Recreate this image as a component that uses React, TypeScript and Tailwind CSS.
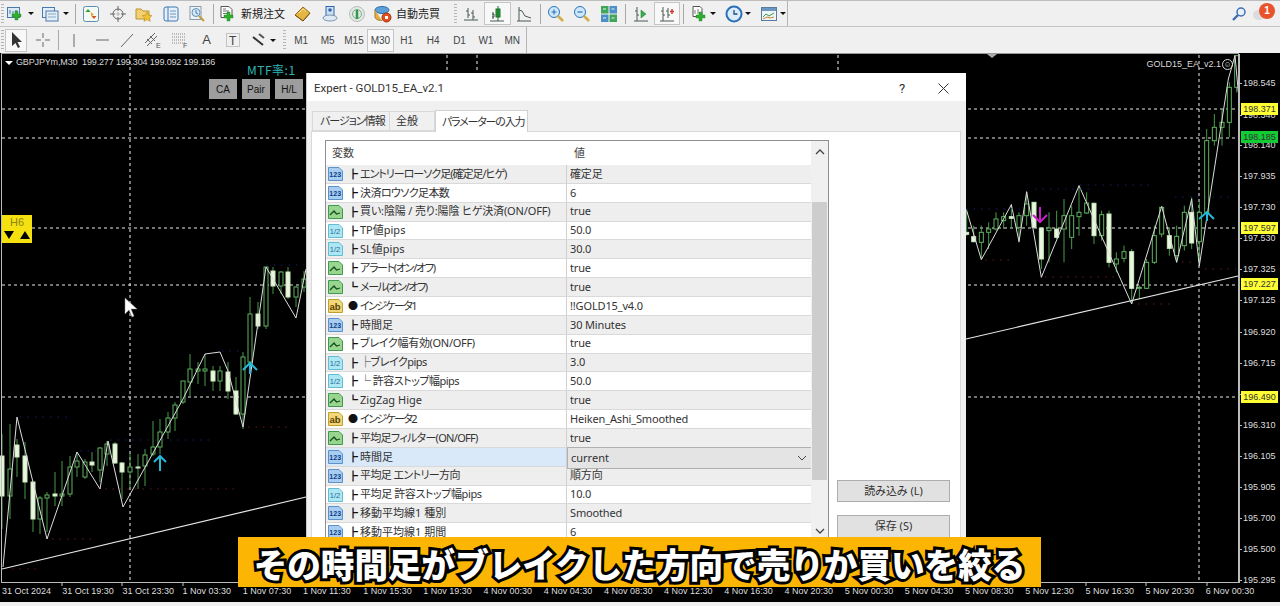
import { ReactNode } from "react";

const UI = "font-['Liberation_Sans','Noto_Sans_CJK_JP',sans-serif]";
const JP = "font-['Noto_Sans','Noto_Sans_CJK_JP',sans-serif] [font-feature-settings:'palt']";

// [x, wickTop, wickBottom, bodyTop, bodyBottom, light]
type Candle = [number, number, number, number, number, number];

const leftCandles: Candle[] = [
  [2, 435, 530, 457, 497, 1], [10, 425, 520, 470, 497, 0], [17, 440, 478, 446, 458, 1], [25, 443, 500, 457, 483, 1],
  [33, 483, 533, 483, 520, 1], [40, 497, 535, 499, 520, 0], [47, 493, 533, 496, 499, 0], [55, 473, 507, 495, 497, 1],
  [62, 462, 507, 495, 497, 0], [70, 457, 498, 468, 495, 0], [77, 453, 478, 462, 468, 0], [85, 460, 480, 463, 478, 0],
  [92, 453, 473, 463, 466, 1], [100, 448, 483, 449, 471, 0], [107, 442, 467, 445, 455, 0], [115, 443, 465, 445, 464, 1],
  [122, 463, 500, 464, 473, 1], [130, 455, 490, 468, 473, 0], [138, 455, 490, 468, 469, 1], [145, 450, 487, 456, 467, 0],
  [153, 422, 457, 448, 455, 0], [160, 420, 455, 433, 448, 0], [168, 413, 440, 419, 433, 0], [175, 403, 432, 406, 419, 0],
  [183, 382, 405, 382, 403, 0], [190, 355, 397, 370, 383, 0], [198, 363, 385, 370, 372, 0], [205, 355, 387, 370, 372, 0],
  [213, 367, 392, 372, 382, 1], [220, 367, 392, 372, 382, 0], [228, 363, 400, 373, 392, 1], [236, 378, 416, 392, 415, 1],
  [243, 353, 430, 358, 415, 0], [250, 298, 370, 315, 363, 0], [258, 303, 330, 315, 327, 1], [266, 268, 330, 268, 327, 0],
  [273, 268, 295, 272, 287, 1], [281, 272, 295, 273, 287, 0], [288, 268, 300, 273, 298, 1], [296, 287, 308, 288, 298, 0],
  [304, 272, 293, 280, 288, 0],
];

const rightCandles: Candle[] = [
  [20, 480, 560, 550, 556, 1], [41, 530, 580, 563, 578, 1], [64, 530, 630, 550, 580, 0], [86, 520, 600, 540, 550, 0],
  [108, 490, 545, 510, 540, 0], [131, 490, 540, 503, 515, 0], [154, 465, 540, 503, 508, 1], [177, 490, 580, 500, 535, 0],
  [200, 430, 530, 465, 500, 0], [222, 460, 535, 460, 535, 1], [244, 535, 660, 537, 630, 1], [267, 490, 640, 537, 545, 0],
  [290, 485, 570, 540, 565, 1], [312, 450, 640, 500, 540, 0], [335, 470, 600, 500, 565, 0], [357, 410, 560, 490, 503, 0],
  [380, 430, 495, 462, 492, 0], [402, 460, 585, 463, 560, 1], [425, 485, 575, 497, 560, 0], [447, 485, 655, 495, 640, 1],
  [469, 610, 670, 630, 645, 0], [492, 590, 640, 608, 628, 0], [515, 600, 765, 608, 718, 1], [538, 710, 750, 715, 718, 0],
  [560, 630, 720, 640, 718, 0], [583, 530, 645, 560, 640, 0], [605, 475, 565, 475, 555, 0], [628, 535, 620, 560, 598, 1],
  [650, 530, 640, 562, 620, 0], [673, 470, 605, 490, 590, 0], [695, 445, 600, 490, 582, 1], [718, 460, 640, 490, 578, 0],
  [740, 240, 490, 275, 490, 0], [763, 195, 290, 235, 275, 0], [786, 180, 290, 220, 235, 0], [808, 100, 265, 115, 220, 0],
  [830, 20, 130, 20, 115, 0],
];

const rightZig = [[20, 485], [64, 632], [154, 467], [177, 578], [200, 428], [244, 685], [357, 410], [515, 765], [605, 472], [650, 640], [695, 450], [718, 650], [805, 90], [825, 20], [835, 130]];

const Dotted = ({ x1, x2, y, color }: { x1: number; x2: number; y: number; color: string }) => (
  <line x1={x1} x2={x2} y1={y} y2={y} stroke={color} strokeWidth="1.2" strokeDasharray="1.5 6" />
);

function CandleMark({ c }: { c: Candle }) {
  const [x, t, b, o, e, light] = c;
  return (
    <g>
      <line x1={x} x2={x} y1={t} y2={b} stroke="#4a9a4a" strokeWidth="1" />
      <rect x={x - 2} y={o} width="4" height={Math.max(e - o, 1)} fill={light ? "#e8f8dc" : "#000"} stroke={light ? "#cfe8c0" : "#5fb35f"} strokeWidth="1" />
    </g>
  );
}

function ChartDrawing() {
  const right: Candle[] = rightCandles.map(([x, t, b, o, e, l]) => [960 + x / 3, 50 + t / 3, 50 + b / 3, 50 + o / 3, 50 + e / 3, l]);
  return (
    <svg className="absolute left-0 top-0 pointer-events-none" width="1280" height="606" viewBox="0 0 1280 606">
      {[110, 139, 229, 286, 398].map((y) => (
        <line key={y} x1="2" x2="1238" y1={y} y2={y} stroke="#e8e8e8" strokeWidth="1" strokeDasharray="3 3" />
      ))}
      {[130, 447, 477, 838, 1199].map((x) => (
        <line key={x} x1={x} x2={x} y1="56" y2="583" stroke="#f2f2f2" strokeWidth="1" strokeDasharray="3 3" />
      ))}
      {leftCandles.map((c) => <CandleMark key={c[0]} c={c} />)}
      {right.map((c) => <CandleMark key={c[0]} c={c} />)}
      <polyline fill="none" stroke="#dddddd" strokeWidth="1" points="3,568 17,418 47,540 77,453 100,490 108,442 123,508 183,400 205,355 220,353 228,372 243,428 266,268 296,319 306,270" />
      <polyline fill="none" stroke="#dddddd" strokeWidth="1" points={rightZig.map(([x, y]) => `${960 + x / 3},${50 + y / 3}`).join(" ")} />
      <line x1="2" y1="570" x2="306" y2="498" stroke="#e6e6e6" strokeWidth="1.1" />
      <line x1="966" y1="340" x2="1238" y2="277" stroke="#e6e6e6" strokeWidth="1.1" />
      <Dotted x1={20} x2={72} y={418} color="#1b1b6a" />
      <Dotted x1={110} x2={215} y={441} color="#1b1b6a" />
      <Dotted x1={80} x2={100} y={452} color="#1b1b6a" />
      <Dotted x1={222} x2={240} y={352} color="#1b1b6a" />
      <Dotted x1={266} x2={304} y={266} color="#1b1b6a" />
      <Dotted x1={52} x2={95} y={540} color="#6b1b1b" />
      <Dotted x1={105} x2={240} y={490} color="#6b1b1b" />
      <Dotted x1={12} x2={42} y={570} color="#6b1b1b" />
      <Dotted x1={248} x2={292} y={428} color="#6b1b1b" />
      <Dotted x1={966} x2={1020} y={210} color="#1b1b6a" />
      <Dotted x1={1035} x2={1090} y={190} color="#1b1b6a" />
      <Dotted x1={1080} x2={1155} y={186} color="#1b1b6a" />
      <Dotted x1={1175} x2={1230} y={198} color="#1b1b6a" />
      <Dotted x1={985} x2={1012} y={261} color="#6b1b1b" />
      <Dotted x1={1045} x2={1118} y={278} color="#6b1b1b" />
      <Dotted x1={1138} x2={1172} y={305} color="#6b1b1b" />
      <Dotted x1={1182} x2={1195} y={263} color="#6b1b1b" />
      <Dotted x1={1205} x2={1236} y={270} color="#6b1b1b" />
      <path d="M160 472V458M154 463L160 457L166 463" fill="none" stroke="#27b9d8" strokeWidth="2" />
      <path d="M250 375V363M243 371L250 364L257 371" fill="none" stroke="#27b9d8" strokeWidth="2" />
      <path d="M1207 222V214M1199 220L1207 213L1214 220" fill="none" stroke="#27b9d8" strokeWidth="2" />
      <path d="M1040 208V222M1033 216L1040 223L1047 216" fill="none" stroke="#c81fc8" strokeWidth="2" />
      <path d="M125 299V315L129 311L132 318L134 317L131 310L137 310Z" fill="#fff" stroke="#888" strokeWidth="0.5" />
      <path d="M27 54H37L32 58Z" fill="#aaa" transform="translate(960 1)" />
      {[62, 122, 183, 243, 1086, 1146, 1207].map((x) => (
        <line key={x} x1={x} x2={x} y1="583" y2="587" stroke="#cccccc" />
      ))}
    </svg>
  );
}

function Grip({ className = "" }: { className?: string }) {
  return <div className={`w-[3px] h-[20px] mx-[1px] shrink-0 bg-[repeating-linear-gradient(#b5b5b5_0_1px,transparent_1px_3px)] ${className}`} />;
}

function Sep({ className = "" }: { className?: string }) {
  return <div className={`w-px h-[20px] shrink-0 bg-[#a8a8a8] ${className}`} />;
}

function Caret({ className = "" }: { className?: string }) {
  return <div className={`w-0 h-0 shrink-0 border-l-[3px] border-r-[3px] border-t-[3px] border-l-transparent border-r-transparent border-t-[#111] ${className}`} />;
}

function Btn({ children, className = "w-[26.5px]", active }: { children: ReactNode; className?: string; active?: boolean }) {
  return (
    <div className={`h-[23px] shrink-0 flex items-center justify-center ${active ? "bg-[#f8f8f8] border border-[#c5c5c5]" : ""} ${className}`}>
      {children}
    </div>
  );
}

const Ic = ({ children }: { children: ReactNode }) => (
  <svg width="18" height="18" viewBox="0 0 18 18" fill="none">{children}</svg>
);

const Plus = ({ x = 8, y = 8 }: { x?: number; y?: number }) => (
  <path d={`M${x + 3} ${y}h3v3h3v3h-3v3h-3v-3h-3v-3h3z`} fill="#2fae2f" stroke="#1a7d1a" strokeWidth="0.4" />
);

const NewChart = (
  <Ic>
    <rect x="1.5" y="2.5" width="12" height="10" fill="#dbe9f6" stroke="#4a7aa8" />
    <path d="M4 5v4M7 6v4M10 5v3" stroke="#4a7aa8" />
    <Plus x={6} y={6} />
  </Ic>
);
const Profiles = (
  <Ic>
    <rect x="1.5" y="2.5" width="12" height="10" fill="#e4eef8" stroke="#4a7aa8" />
    <rect x="5" y="6" width="12" height="10" fill="#e4eef8" stroke="#4a7aa8" />
    <path d="M7 9h8M7 12h8" stroke="#8aa8c4" />
  </Ic>
);
const MarketWatch = (
  <Ic>
    <rect x="1.5" y="1.5" width="15" height="15" rx="2" fill="#f4f9f2" stroke="#5d8fb5" />
    <path d="M6 4l2.5 3h-5z" fill="#2da02d" />
    <path d="M12 14l-2.5-3h5z" fill="#d0561c" />
    <path d="M9 7l3 3-3 1z" fill="#e0a030" />
  </Ic>
);
const Navigator = (
  <Ic>
    <circle cx="9" cy="9" r="5" stroke="#666" />
    <path d="M9 1v5M9 12v5M1 9h5M12 9h5" stroke="#666" />
    <path d="M7 9h4M9 7v4" stroke="#b0b0b0" />
  </Ic>
);
const Folders = (
  <Ic>
    <path d="M1 4h5l2 2h6v8H1z" fill="#f3d173" stroke="#b9922e" />
    <path d="M12 7l1.6 3.2 3.4.4-2.5 2.3.7 3.4-3.2-1.7-3 1.7.6-3.4-2.4-2.3 3.3-.4z" fill="#f2c233" stroke="#b98a1c" strokeWidth="0.6" />
  </Ic>
);
const Terminal = (
  <Ic>
    <rect x="2" y="2" width="14" height="14" rx="2" fill="#e7f0fa" stroke="#3f78b4" />
    <path d="M6 2v14" stroke="#3f78b4" />
    <path d="M8 6h6M8 9h6M8 12h6" stroke="#6b93bc" />
  </Ic>
);
const Tester = (
  <Ic>
    <rect x="2" y="1.5" width="11" height="13" fill="#eef3f7" stroke="#8a9aa8" />
    <circle cx="8" cy="7.5" r="4" fill="#d5e7f5" stroke="#5d8fb5" />
    <path d="M8 5v3l2 1" stroke="#4a7aa8" />
    <path d="M11 11l5 5" stroke="#c29a3a" strokeWidth="2" />
  </Ic>
);
const NewOrder = (
  <Ic>
    <path d="M3 1.5h8l3 3v8H3z" fill="#fff" stroke="#555" />
    <path d="M5 6h6M5 8.5h6M5 4h3" stroke="#777" />
    <Plus x={6} y={7} />
  </Ic>
);
const GoldBook = (
  <Ic>
    <path d="M1 10l8-8 7 6-7 8z" fill="#e2b544" stroke="#9a6e14" />
    <path d="M1 10l8 6 7-8" stroke="#7a5510" fill="none" />
    <path d="M5 8l4-4 3 2.5" stroke="#f6e2a2" />
  </Ic>
);
const Community = (
  <Ic>
    <rect x="5" y="1.5" width="8" height="9" fill="#cfe0f2" stroke="#2d66ad" />
    <circle cx="9" cy="5" r="1.8" fill="#2d66ad" />
    <ellipse cx="9" cy="13" rx="7" ry="3" fill="#dfe9f3" stroke="#7b96b2" />
  </Ic>
);
const Signal = (
  <Ic>
    <circle cx="9" cy="9" r="7.5" fill="#e2e8e4" stroke="#b5bfb8" />
    <circle cx="9" cy="9" r="4.5" stroke="#7ea888" />
    <path d="M9 5v9" stroke="#2f9a4a" strokeWidth="2.5" />
  </Ic>
);
const AutoTrade = (
  <Ic>
    <ellipse cx="8" cy="5" rx="7" ry="3.5" fill="#5ca0d8" stroke="#2f6ca8" />
    <path d="M1 5v7c0 2 3 3.5 7 3.5" fill="#e2b04a" stroke="#b07a1c" />
    <circle cx="12.5" cy="12.5" r="4.5" fill="#e0501e" stroke="#a5330f" />
    <rect x="11" y="11" width="3" height="3" fill="#fff" />
  </Ic>
);
const BarIcon = (
  <Ic>
    <path d="M2 15h14M6 3v10M4 6h2M6 10h2M11 5v10M9 8h2M11 12h2" stroke="#4b5b52" />
  </Ic>
);
const CandleIcon = (
  <Ic>
    <path d="M2 16h14M5 7v7M4 9h2v3H4" stroke="#4b5b52" />
    <rect x="8" y="4" width="4" height="8" fill="#25a53c" stroke="#1d6e2a" />
    <path d="M10 1v15" stroke="#1d6e2a" />
  </Ic>
);
const LineIcon = (
  <Ic>
    <path d="M2 16h14M4 2v14M4 5l3 1 3 5 6 2" stroke="#4b5b52" />
  </Ic>
);
const ZoomIn = (
  <Ic>
    <circle cx="7" cy="7" r="5.5" fill="#cfe7fb" stroke="#2c74b8" />
    <path d="M4.5 7h5M7 4.5v5" stroke="#2c74b8" strokeWidth="1.2" />
    <path d="M11 11l5 5" stroke="#d3ad48" strokeWidth="2.6" />
  </Ic>
);
const ZoomOut = (
  <Ic>
    <circle cx="7" cy="7" r="5.5" fill="#cfe7fb" stroke="#2c74b8" />
    <path d="M4.5 7h5" stroke="#2c74b8" strokeWidth="1.2" />
    <path d="M11 11l5 5" stroke="#d3ad48" strokeWidth="2.6" />
  </Ic>
);
const Tile = (
  <Ic>
    <rect x="1" y="1" width="7.5" height="7.5" fill="#3fa65a" />
    <rect x="9.5" y="1" width="7.5" height="7.5" fill="#4d8fc9" />
    <rect x="1" y="9.5" width="7.5" height="7.5" fill="#4d8fc9" />
    <rect x="9.5" y="9.5" width="7.5" height="7.5" fill="#3fa65a" />
    <path d="M3 4h3M11.5 4h3M3 13h3M11.5 13h3" stroke="#e8f4ea" />
  </Ic>
);
const Scroll = (
  <Ic>
    <path d="M2 16h14M5 2v14M3 6h2M5 10h2" stroke="#4b5b52" />
    <path d="M9 5l5 4-5 4z" fill="#36b04a" stroke="#1f7a2e" strokeWidth="0.5" />
  </Ic>
);
const Shift = (
  <Ic>
    <path d="M2 16h14M5 2v14M3 6h2M5 10h2M10 3v10M8 6h2M10 10h2" stroke="#4b5b52" />
    <path d="M14 4v5M12 6.5h4" stroke="#c8362a" strokeWidth="1.4" />
  </Ic>
);
const Indicators = (
  <Ic>
    <path d="M3 1.5h7l2 2v8H3z" fill="#fff" stroke="#555" />
    <path d="M5 5v4M8 4v5" stroke="#777" />
    <Plus x={6} y={7} />
  </Ic>
);
const Clock = (
  <Ic>
    <circle cx="9" cy="9" r="7.5" fill="#dcecfa" stroke="#2a71b8" strokeWidth="2" />
    <path d="M9 5v4h3.5" stroke="#224f7e" strokeWidth="1.3" />
  </Ic>
);
const Templates = (
  <Ic>
    <rect x="1.5" y="2.5" width="15" height="13" fill="#f0f5fa" stroke="#5a7d9e" />
    <rect x="2" y="3" width="14" height="3" fill="#6b97c2" />
    <path d="M3 12l3-3 3 2 5-3" stroke="#3a9a4a" />
    <path d="M3 14l4-2 3 1 4-1" stroke="#c8862a" />
  </Ic>
);
const Arrow = (
  <svg width="14" height="18" viewBox="0 0 14 18">
    <path d="M3 1v14l3.5-3 2.5 5 2-1-2.5-5H13z" fill="#333" />
  </svg>
);
const Cross = (
  <Ic>
    <path d="M9 2v5M9 11v5M2 9h5M11 9h5" stroke="#666" />
  </Ic>
);
const VLine = <Ic><path d="M9 3v13" stroke="#666" /></Ic>;
const HLine = <Ic><path d="M3 9h13" stroke="#666" /></Ic>;
const Trend = <Ic><path d="M3 16L15 3" stroke="#666" /></Ic>;
const Channels = (
  <Ic>
    <path d="M1 12L11 2M3 15L13 5M6 5l5 5M3 8l5 5" stroke="#666" />
    <text x="12" y="17" fontSize="7" fill="#555" fontFamily="Liberation Sans">E</text>
  </Ic>
);
const Fibo = (
  <Ic>
    <path d="M1 3h13M1 6h13M1 9h13M1 12h13" stroke="#888" strokeDasharray="1 1" />
    <text x="12" y="17" fontSize="7" fill="#555" fontFamily="Liberation Sans">F</text>
  </Ic>
);
const TextLabel = (
  <Ic>
    <rect x="2.5" y="2.5" width="13" height="13" stroke="#999" strokeDasharray="1 1" />
    <text x="5" y="14" fontSize="12" fill="#444" fontFamily="Liberation Sans">T</text>
  </Ic>
);
const Arrows = (
  <Ic>
    <path d="M2 6l5 4M7 10l5 4" stroke="#333" strokeWidth="2" />
    <path d="M8 3l5 4" stroke="#555" strokeWidth="2" />
  </Ic>
);

function Toolbars() {
  return (
    <div className={`h-[53px] bg-[#f0f0f0] border-t border-[#bdbdbd] relative ${UI}`}>
      <div className="h-[26px] flex items-center border-b border-[#c4c4c4]">
        <div className="w-[788px] h-full flex items-center border-r border-[#b5b5b5]">
          <Grip />
          <Btn className="w-[20px]">{NewChart}</Btn>
          <Caret className="ml-[3px]" />
          <Btn className="w-[20px] ml-[6px]">{Profiles}</Btn>
          <Caret className="ml-[3px]" />
          <Sep className="ml-[6px] mr-[2px]" />
          <Btn>{MarketWatch}</Btn>
          <Btn>{Navigator}</Btn>
          <Btn>{Folders}</Btn>
          <Btn>{Terminal}</Btn>
          <Btn>{Tester}</Btn>
          <Sep className="ml-[2.5px] mr-[4px]" />
          <div className="flex items-center h-full w-[71.5px] shrink-0 text-[11px] text-[#222] font-['Noto_Sans_CJK_JP',sans-serif]">
            <div className="w-[18px] flex justify-center">{NewOrder}</div>
            <span className="ml-[5px] whitespace-nowrap">新規注文</span>
          </div>
          <Btn className="w-[27px]">{GoldBook}</Btn>
          <Btn className="w-[27px]">{Community}</Btn>
          <Btn className="w-[27px]">{Signal}</Btn>
          <div className="flex items-center h-full w-[78.5px] ml-[3.5px] shrink-0 text-[11px] text-[#222] font-['Noto_Sans_CJK_JP',sans-serif]">
            <div className="w-[18px] flex justify-center">{AutoTrade}</div>
            <span className="ml-[4px] whitespace-nowrap">自動売買</span>
          </div>
          <Grip />
          <Btn>{BarIcon}</Btn>
          <Btn active>{CandleIcon}</Btn>
          <Btn>{LineIcon}</Btn>
          <Sep className="ml-[2.5px] mr-[1.75px]" />
          <Btn>{ZoomIn}</Btn>
          <Btn>{ZoomOut}</Btn>
          <Btn>{Tile}</Btn>
          <Sep className="ml-[2.75px] mr-[1.75px]" />
          <Btn>{Scroll}</Btn>
          <Btn active>{Shift}</Btn>
          <Sep className="ml-[2.25px] mr-[4px]" />
          <Btn className="w-[22px]">{Indicators}</Btn>
          <Caret />
          <Btn className="w-[22px] ml-[7px]">{Clock}</Btn>
          <Caret />
          <Btn className="w-[22px] ml-[7px]">{Templates}</Btn>
          <Caret />
        </div>
        <div className="flex-1 flex items-center justify-end pr-[5px] gap-[6px]">
          <svg width="16" height="16" viewBox="0 0 16 16" fill="none">
            <circle cx="10" cy="6" r="4" fill="#e8f1fb" stroke="#3d6fb0" strokeWidth="1.5" />
            <path d="M7 9l-5 5" stroke="#3d6fb0" strokeWidth="2.4" />
          </svg>
          <div className="relative w-[22px] h-[20px]">
            <div className="absolute left-0 top-[6px] w-[12px] h-[10px] rounded-full bg-[#dcdcdc]" />
            <div className="absolute right-0 top-[-1px] w-[16px] h-[16px] rounded-full bg-[#e8532c] text-white text-[10px] font-bold flex items-center justify-center">1</div>
          </div>
        </div>
      </div>
      <div className="h-[26px] flex items-center">
        <div className="w-[527px] h-full flex items-center border-r border-[#b5b5b5]">
          <Grip />
          <Btn active className="w-[22px]">{Arrow}</Btn>
          <Btn className="w-[31px]">{Cross}</Btn>
          <Sep />
          <Btn className="w-[30px]">{VLine}</Btn>
          <Btn className="w-[25px]">{HLine}</Btn>
          <Btn className="w-[26px]">{Trend}</Btn>
          <Btn className="w-[26px]">{Channels}</Btn>
          <Btn className="w-[27px]">{Fibo}</Btn>
          <div className="w-[27px] shrink-0 flex justify-center text-[13px] text-[#444]">A</div>
          <Btn className="w-[26px]">{TextLabel}</Btn>
          <Btn className="w-[27px]">{Arrows}</Btn>
          <Caret className="-ml-[3px]" />
          <Grip className="ml-[7px] mr-[2px]" />
          <div className="flex items-center text-[10px] text-[#444]">
            {["M1", "M5", "M15", "M30", "H1", "H4", "D1", "W1", "MN"].map((m) => (
              <div key={m} className={`w-[26.4px] h-[23px] flex items-center justify-center ${m === "M30" ? "bg-[#f8f8f8] border border-[#c5c5c5]" : ""}`}>{m}</div>
            ))}
          </div>
        </div>
      </div>
    </div>
  );
}

type Kind = "int" | "bool" | "dbl" | "str";

function TypeIcon({ kind }: { kind: Kind }) {
  const fill = { int: "#a9cdf0", bool: "#9ad58f", dbl: "#aee6f2", str: "#f0d77a" }[kind];
  const edge = { int: "#5b92cc", bool: "#3f9a4f", dbl: "#62bcd4", str: "#c2a02e" }[kind];
  return (
    <svg width="15" height="14" viewBox="0 0 15 14" className="shrink-0">
      <path d="M.5.5H11L14.5 4V13.5H.5Z" fill={fill} stroke={edge} />
      {kind === "bool" && <path d="M2 10l4-4 2.5 3L12 8" fill="none" stroke="#14521f" strokeWidth="1.3" />}
      {kind === "int" && <text x="7.2" y="10" textAnchor="middle" fontSize="7" fontWeight="700" fill="#0a3e8a" fontFamily="Liberation Sans">123</text>}
      {kind === "dbl" && <text x="7" y="10" textAnchor="middle" fontSize="7.5" fill="#1a6a9a" fontFamily="Liberation Sans">1/2</text>}
      {kind === "str" && <text x="7" y="10.5" textAnchor="middle" fontSize="9.5" fontWeight="700" fill="#5a4000" fontFamily="Liberation Sans">ab</text>}
    </svg>
  );
}

const rows: [Kind, string, string, string, string][] = [
  ["int", "┣", "エントリーローソク足(確定足/ヒゲ)", "確定足", "tracking-[-1px]"],
  ["int", "┣", "決済ロウソク足本数", "6", "tracking-[-0.6px]"],
  ["bool", "┣", "買い:陰陽 / 売り:陽陰 ヒゲ決済(ON/OFF)", "true", "tracking-[-0.15px]"],
  ["dbl", "┣", "TP値pips", "50.0", ""],
  ["dbl", "┣", "SL値pips", "30.0", ""],
  ["bool", "┣", "アラート(オン/オフ)", "true", "tracking-[-1.3px]"],
  ["bool", "┗", "メール(オン/オフ)", "true", "tracking-[-1.4px]"],
  ["str", "●", "インジケータ1", "!!GOLD15_v4.0", "tracking-[-1.6px]"],
  ["int", "┣", "時間足", "30 Minutes", ""],
  ["bool", "┣", "ブレイク幅有効(ON/OFF)", "true", "tracking-[-0.3px]"],
  ["dbl", "┣", "├ブレイクpips", "3.0", "tracking-[-0.5px]"],
  ["dbl", "┣", "└ 許容ストップ幅pips", "50.0", "tracking-[-0.5px]"],
  ["bool", "┗", "ZigZag Hige", "true", ""],
  ["str", "●", "インジケータ2", "Heiken_Ashi_Smoothed", "tracking-[-1.6px]"],
  ["bool", "┣", "平均足フィルター(ON/OFF)", "true", "tracking-[-0.7px]"],
  ["int", "┣", "時間足", "current", ""],
  ["int", "┣", "平均足 エントリー方向", "順方向", "tracking-[-0.6px]"],
  ["dbl", "┣", "平均足 許容ストップ幅pips", "10.0", "tracking-[-0.4px]"],
  ["int", "┣", "移動平均線1 種別", "Smoothed", ""],
  ["int", "┣", "移動平均線1 期間", "6", ""],
];

function ParamTable() {
  return (
    <div className="ml-[13px] mt-[8px] w-[504px] h-[420px] bg-white border-l border-t border-r border-[#8f8f8f] relative overflow-hidden">
      <div className="h-[24px] flex items-center text-[11px] text-[#444]">
        <div className="w-[241px] pl-[6px]">変数</div>
        <div className="pl-[7px]">値</div>
      </div>
      <div className="w-[486px]">
        {rows.map(([kind, mark, name, value, spacing], i) => {
          const selected = i === 15;
          return (
            <div key={i} className={`h-[18.87px] flex text-[11px] text-[#333] border-b border-[#d9d9d9] ${i % 2 === 0 ? "bg-[#eeeeee]" : "bg-white"}`}>
              <div className={`w-[241px] shrink-0 flex items-center pl-[2px] border-r border-[#d0d0d0] whitespace-nowrap ${selected ? "bg-[#d9e9f9]" : ""}`}>
                <TypeIcon kind={kind} />
                <span className="w-[7px] ml-[5px] text-[10px] text-[#111] leading-none">{mark}</span>
                <span className={`ml-[5px] ${spacing}`}>{name}</span>
              </div>
              {selected ? (
                <div className="flex-1 h-[22px] -mt-[1px] bg-[#e4e4e4] border border-[#b0b0b0] flex items-center justify-between pl-[3px] pr-[4px] relative">
                  <span>{value}</span>
                  <svg width="10" height="6" viewBox="0 0 10 6"><path d="M1 1l4 4 4-4" fill="none" stroke="#444" /></svg>
                </div>
              ) : (
                <div className="flex-1 flex items-center pl-[3px] tracking-[-0.15px]">{value}</div>
              )}
            </div>
          );
        })}
      </div>
      <div className="absolute right-0 top-0 w-[17px] h-full bg-[#f0f0f0] flex flex-col items-center">
        <svg width="10" height="6" viewBox="0 0 10 6" className="mt-[8px]"><path d="M1 5l4-4 4 4" fill="none" stroke="#444" strokeWidth="1.3" /></svg>
        <div className="w-[15px] h-[278px] mt-[47px] bg-[#cdcdcd]" />
        <svg width="10" height="6" viewBox="0 0 10 6" className="mt-[48px]"><path d="M1 1l4 4 4-4" fill="none" stroke="#444" strokeWidth="1.3" /></svg>
      </div>
    </div>
  );
}

function Dialog() {
  return (
    <div className={`absolute left-[306px] top-[20px] w-[660px] h-[512px] bg-[#f0f0f0] border-l border-[#c9c9c9] ${JP}`}>
      <div className="h-[28px] bg-white flex items-center pl-[7px] pt-[3px] text-[11.5px] text-[#333] font-['Roboto',sans-serif]">
        <span className="flex-1">Expert - GOLD15_EA_v2.1</span>
        <span className="w-[39px] text-[13px]">?</span>
        <svg width="11" height="11" viewBox="0 0 11 11" className="mr-[17px]"><path d="M.5.5l10 10M10.5.5l-10 10" stroke="#333" /></svg>
      </div>
      <div className="flex items-end h-[30px] pl-[5px] text-[11px] text-[#333] whitespace-nowrap">
        <div className="h-[20px] w-[78px] flex items-center pl-[7px] pt-[1px] tracking-[-1px] bg-[#f0f0f0] border border-[#d9d9d9]">バージョン情報</div>
        <div className="h-[20px] w-[45px] flex items-center pl-[6px] pt-[1px] bg-[#f0f0f0] border border-[#d9d9d9] border-l-0">全般</div>
        <div className="h-[22px] w-[93px] flex items-center pl-[6px] pt-[1px] tracking-[-1.2px] bg-white border border-[#d0d0d0] border-b-0 relative top-px z-10">パラメーターの入力</div>
      </div>
      <div className="ml-[4px] w-[650px] h-[454px] bg-white border border-[#d9d9d9] flex">
        <ParamTable />
        <div className="ml-[8px] mt-[348px] w-[113px] flex flex-col gap-[13px] text-[11px] text-[#333]">
          <div className="h-[22px] bg-[#e1e1e1] border border-[#adadad] flex items-center justify-center">読み込み (L)</div>
          <div className="h-[23px] bg-[#e1e1e1] border border-[#adadad] flex items-center justify-center">保存 (S)</div>
        </div>
      </div>
    </div>
  );
}

const prices: [string, number][] = [
  ["198.545", 84], ["198.340", 116], ["198.140", 146], ["197.935", 177], ["197.730", 208], ["197.530", 239], ["197.325", 270],
  ["197.125", 301], ["196.920", 333], ["196.715", 364], ["196.510", 395], ["196.310", 426], ["196.105", 457], ["195.905", 488],
  ["195.700", 519], ["195.500", 550], ["195.295", 581],
];

const marks: [string, number, string][] = [
  ["198.371", 110, "bg-[#ffff33]"], ["198.185", 138, "bg-[#11cc33]"], ["197.597", 229, "bg-[#ffff33]"], ["197.227", 285, "bg-[#ffff33]"], ["196.490", 398, "bg-[#ffff33]"],
];

const times = [
  "31 Oct 2024", "31 Oct 19:30", "31 Oct 23:30", "1 Nov 03:30", "1 Nov 07:30", "1 Nov 11:30", "1 Nov 15:30", "1 Nov 19:30",
  "4 Nov 00:30", "4 Nov 04:30", "4 Nov 08:30", "4 Nov 12:30", "4 Nov 16:30", "4 Nov 20:30", "5 Nov 00:30", "5 Nov 04:30", "5 Nov 08:30",
  "5 Nov 12:30", "5 Nov 16:30", "5 Nov 20:30", "6 Nov 00:30",
];

function Chart() {
  return (
    <div className={`h-[549px] bg-black relative overflow-hidden ${UI}`}>
      <div className="absolute left-0 top-[-54px]"><ChartDrawing /></div>
      <div className="absolute left-[1px] top-[1px] w-px h-[528px] bg-[#bbb]" />
      <div className="absolute left-[1px] top-[529px] w-[1238px] h-[1px] bg-[#bbb]" />
      <div className="absolute left-[1238px] top-[1px] w-[2px] h-[529px] bg-[#bbb]" />
      <div className="absolute left-[1px] top-0 w-[1238px] h-px bg-[#999]" />

      <div className="absolute left-[5px] top-[3px] flex items-center text-[9px] tracking-[-0.15px] text-[#d9d9d9] whitespace-pre">
        <span className="w-0 h-0 border-l-[4px] border-r-[4px] border-t-[4px] border-l-transparent border-r-transparent border-t-white mr-[3px]" />
        GBPJPYm,M30  199.277 199.304 199.092 199.186
      </div>
      <div className="absolute left-[247px] top-[8px] text-[12px] text-[#2fb3b3] tracking-[0.5px] font-['Noto_Sans_CJK_JP',sans-serif]">MTF率:1</div>
      <div className="absolute left-[209px] top-[26px] flex gap-[5px] text-[10px] text-[#111]">
        <div className="w-[28px] h-[20px] bg-[#9d9d9d] flex items-center justify-center">CA</div>
        <div className="w-[28px] h-[20px] bg-[#9d9d9d] flex items-center justify-center">Pair</div>
        <div className="w-[28px] h-[20px] bg-[#9d9d9d] flex items-center justify-center">H/L</div>
      </div>
      <div className="absolute left-[2px] top-[162px] w-[30px] h-[28px] bg-[#f5e10f] flex flex-col items-center text-[#8c8414] text-[11px] leading-[13px]">
        <span className="mt-[1px]">H6</span>
        <div className="flex gap-[6px] mt-[2px]">
          <span className="w-0 h-0 border-l-[5px] border-r-[5px] border-t-[8px] border-l-transparent border-r-transparent border-t-black" />
          <span className="w-0 h-0 border-l-[5px] border-r-[5px] border-b-[8px] border-l-transparent border-r-transparent border-b-black" />
        </div>
      </div>

      <div className="absolute right-[47px] top-[5px] flex items-center text-[9px] text-[#d9d9d9]">
        GOLD15_EA_v2.1
        <span className="ml-[1px] w-[11px] h-[11px] rounded-full border border-[#ddd] text-[8px] leading-[9px] text-center">☺</span>
      </div>

      {prices.map(([p, y]) => (
        <div key={p} className="absolute left-[1238px] text-[9px] leading-[12px] text-[#dedede] flex items-center" style={{ top: y - 54 - 6 }}>
          <span className="w-[4px] h-px bg-[#bbb] mr-[1px]" />
          {p}
        </div>
      ))}
      {marks.map(([p, y, bg]) => (
        <div key={p} className={`absolute left-[1241px] w-[37px] h-[12px] text-[9px] leading-[12px] text-[#333] text-center ${bg}`} style={{ top: y - 54 - 6 }}>
          {p}
        </div>
      ))}

      <div className="absolute left-[2px] top-[532px] flex text-[9px] leading-[12px] text-[#dedede] whitespace-nowrap">
        {times.map((t) => (
          <div key={t} className="w-[60.2px]">{t}</div>
        ))}
      </div>

      <Dialog />
    </div>
  );
}

export default function App() {
  return (
    <div className="w-[1280px] h-[606px] overflow-hidden bg-[#f0f0f0] relative">
      <Toolbars />
      <Chart />
      <div className="absolute left-[238px] top-[537px] w-[803px] h-[50px] bg-[#fdb504] flex items-center justify-center">
        <span className="mt-[3px] text-[33.6px] font-black text-white whitespace-nowrap [-webkit-text-stroke:6px_#000] [paint-order:stroke_fill] font-['Noto_Sans_CJK_JP',sans-serif] leading-none">
          その時間足がブレイクした方向で売りか買いを絞る
        </span>
      </div>
    </div>
  );
}
